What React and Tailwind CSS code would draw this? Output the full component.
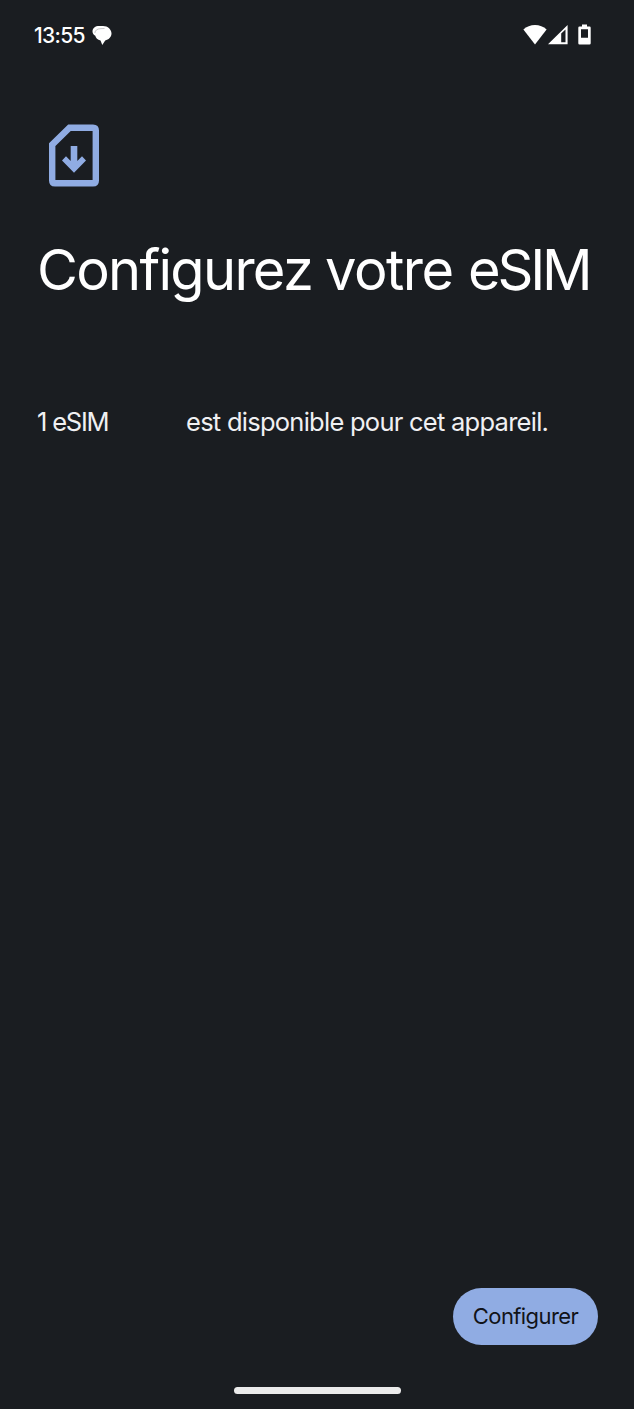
import React from 'react';

const MessageIcon = () => (
  <svg className="w-5 h-5" viewBox="0 0 20 20" fill="none">
    <path
      d="M0.500 6.500C0.500 3 3.300 1 7.200 1H11C16 1 19.500 4.600 19.500 8.600C19.500 12.200 16.600 14.900 13.200 15.500L10.300 20L8.500 15.500C5.600 14.800 3.700 13 3.300 10.800C1.600 9.800 0.500 8.400 0.500 6.500Z"
      fill="#fff"
    />
    <path
      d="M2.800 8C3.200 5.200 5.200 3.800 8.500 3.700L12.500 3.500"
      stroke="#1a1d21"
      strokeWidth="0.500"
      strokeOpacity="0.500"
    />
  </svg>
);

const WifiIcon = () => (
  <svg className="w-6 h-5" viewBox="0 0 24 20">
    <path
      d="M0.400 4.400C3.500 1.600 7.500 0 12 0S20.500 1.600 23.600 4.400L12 19.400Z"
      fill="#fff"
    />
  </svg>
);

const SignalIcon = () => (
  <svg className="w-5 h-5" viewBox="0 0 20 20">
    <path
      d="M0 19.300L19.600 0V19.300ZM13.200 8.500V17.300H17.500V4.600Z"
      fill="#fff"
      fillRule="evenodd"
    />
  </svg>
);

const BatteryIcon = () => (
  <svg className="w-[13px] h-[21px]" viewBox="0 0 13 21">
    <path
      d="M4 0.500H9V2.500H11.500Q12.700 2.500 12.700 3.700V19.300Q12.700 20.500 11.500 20.500H1.500Q0.300 20.500 0.300 19.300V3.700Q0.300 2.500 1.500 2.500H4ZM3 5.300V13.700H10V5.300Z"
      fill="#fff"
      fillRule="evenodd"
    />
  </svg>
);

const SimDownloadIcon = () => (
  <svg className="w-[50px] h-[63px]" viewBox="0 0 50 63" fill="none">
    <path
      d="M20.500 3.700H44Q46.800 3.700 46.800 6.500V56.500Q46.800 59.300 44 59.300H6Q3.200 59.300 3.200 56.500V20.700Z"
      stroke="#90ace3"
      strokeWidth="6.400"
    />
    <path
      d="M21.700 22H28.300V37L33 32.300L37 36.400L25 48.800L13 36.400L17 32.300L21.700 37Z"
      fill="#90ace3"
    />
  </svg>
);

const StatusBar = () => (
  <header className="flex items-center justify-between h-[70px] pl-[34px] pr-[43px]">
    <div className="flex items-center gap-[7px]">
      <span className="w-[51px] pt-px text-[21px] font-medium tracking-[-0.7px] whitespace-nowrap">
        13:55
      </span>
      <MessageIcon />
    </div>
    <div className="flex items-center pb-px">
      <WifiIcon />
      <span className="ml-px flex">
        <SignalIcon />
      </span>
      <span className="ml-[10px] flex">
        <BatteryIcon />
      </span>
    </div>
  </header>
);

const App = () => {
  return (
    <div className="flex flex-col w-[634px] h-[1409px] bg-[#1a1d21] text-white font-['Inter',sans-serif] overflow-hidden">
      <StatusBar />

      <main className="flex flex-col flex-grow">
        <div className="mt-[54px] ml-[49px]">
          <SimDownloadIcon />
        </div>

        <h1 className="flex mt-[49px] ml-[37px] text-[56px] leading-[68px] whitespace-nowrap">
          <span className="w-[288px] tracking-[-1.7px]">Configurez </span>
          <span className="w-[143px] tracking-[-1.5px]">votre </span>
          <span className="tracking-[-3.2px]">eSIM</span>
        </h1>

        <p className="flex mt-[102px] ml-[37px] text-[25.5px] leading-[32px] text-[#f0f0f2] whitespace-nowrap">
          <span className="w-[149px] tracking-[-1.2px]">1 eSIM </span>
          <span className="tracking-[-0.74px]">
            est disponible pour cet appareil.
          </span>
        </p>
      </main>

      <footer className="flex flex-col">
        <button className="self-end mr-9 w-[145px] h-[57px] pb-px rounded-full bg-[#90ace3] text-[#111318] text-[22px] tracking-[-0.6px]">
          Configurer
        </button>
        <div className="self-center mt-[42px] mb-[15px] w-[167px] h-[7px] rounded-full bg-[#ebebeb]" />
      </footer>
    </div>
  );
};

export default App;
